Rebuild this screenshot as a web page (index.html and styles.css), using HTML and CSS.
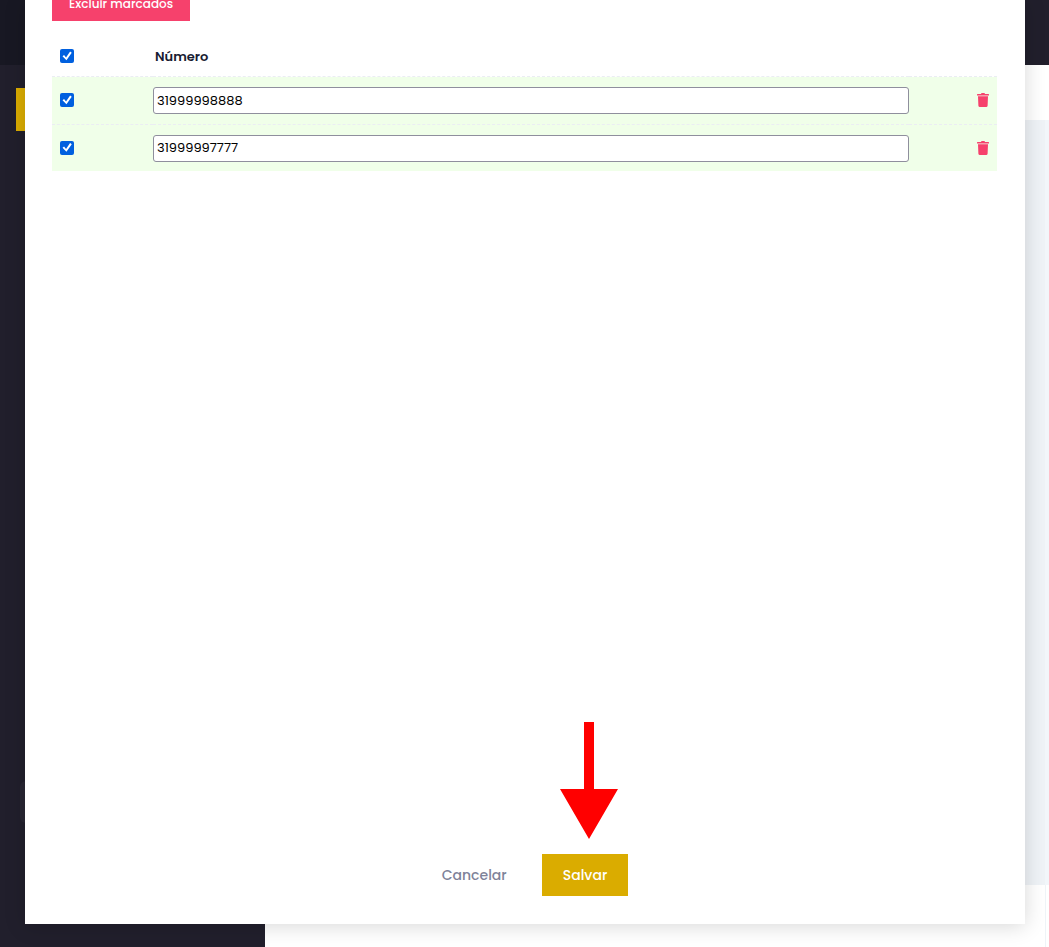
FILE: index.html
```html
<!DOCTYPE html>
<html lang="pt-BR">
<head>
<meta charset="utf-8">
<meta name="viewport" content="width=device-width, initial-scale=1">
<title>Números</title>
<link rel="stylesheet" href="styles.css">
</head>
<body>
<div class="page">
  <aside class="sidebar">
    <div class="brand"></div>
    <div class="nav">
      <div class="nav-active"></div>
      <div class="nav-tile"></div>
    </div>
  </aside>
  <div class="main">
    <div class="topbar"></div>
    <div class="subheader"></div>
    <div class="content"></div>
    <div class="page-footer"></div>
  </div>
</div>

<div class="overlay">
  <form class="modal" role="dialog" aria-label="Números">
    <button type="button" class="btn btn-danger">Excluir marcados</button>
    <table class="numbers">
      <colgroup><col class="col-check"><col class="col-number"><col></colgroup>
      <thead>
        <tr>
          <th><input class="check" type="checkbox" aria-label="Marcar todos" checked></th>
          <th class="number-title" scope="col">Número</th>
          <td></td>
        </tr>
      </thead>
      <tbody>
        <tr>
          <td><input class="check" type="checkbox" aria-label="Marcar 31999998888" checked></td>
          <td class="number-cell"><input class="number" type="text" aria-label="Número 1" value="31999998888"></td>
          <td class="action"><button type="button" class="trash" aria-label="Excluir 31999998888"><svg viewBox="0 0 12 14" width="12" height="14" aria-hidden="true"><path d="M4 1Q4 0 5 0H7Q8 0 8 1H11.4Q12 1 12 1.6V2.5H0V1.6Q0 1 .6 1ZM1 3.2H11L10.6 12.7Q10.4 14 9.2 14H2.8Q1.6 14 1.4 12.7Z"/></svg></button></td>
        </tr>
        <tr>
          <td><input class="check" type="checkbox" aria-label="Marcar 31999997777" checked></td>
          <td class="number-cell"><input class="number" type="text" aria-label="Número 2" value="31999997777"></td>
          <td class="action"><button type="button" class="trash" aria-label="Excluir 31999997777"><svg viewBox="0 0 12 14" width="12" height="14" aria-hidden="true"><path d="M4 1Q4 0 5 0H7Q8 0 8 1H11.4Q12 1 12 1.6V2.5H0V1.6Q0 1 .6 1ZM1 3.2H11L10.6 12.7Q10.4 14 9.2 14H2.8Q1.6 14 1.4 12.7Z"/></svg></button></td>
        </tr>
      </tbody>
    </table>
    <div class="actions">
      <button type="button" class="btn btn-cancel">Cancelar</button>
      <div class="save">
        <svg class="arrow" viewBox="0 0 58 117" width="58" height="117" aria-hidden="true"><path d="M24 0H34V67H58L29 117L0 67H24Z"/></svg>
        <button type="submit" class="btn btn-save">Salvar</button>
      </div>
    </div>
  </form>
</div>
</body>
</html>
```

FILE: styles.css
```css
* { box-sizing: border-box; }

body {
  margin: 0;
  overflow: hidden;
  background: #fff;
  color: #181c32;
  font-family: Poppins, Inter, "Liberation Sans", sans-serif;
  font-size: 13px;
}

.page {
  display: flex;
  height: 100vh;
}

.sidebar {
  width: 265px;
  background: #211f2c;
}

.brand {
  height: 65px;
  background: #181823;
}

.nav {
  display: flex;
  flex-direction: column;
  justify-content: space-between;
  height: calc(100vh - 65px);
  padding: 23px 20px 124px 16px;
}

.nav-active {
  height: 43px;
  background: #daac00;
}

.nav-tile {
  height: 42px;
  margin-left: 4px;
  border-radius: 6px;
  background: #282633;
}

.main {
  display: flex;
  flex: 1;
  flex-direction: column;
}

.topbar {
  height: 65px;
  background: #211f2c;
}

.subheader {
  height: 55px;
  background: #fff;
}

.content {
  flex: 1;
  border-right: 4px solid #f2f6fa;
  background: #eff3f7;
}

.page-footer {
  height: 62px;
  margin-right: 3px;
  border-right: 1px solid #eff3f7;
  background: #fff;
}

.overlay {
  position: absolute;
  inset: 0;
  display: flex;
  padding: 0 24px 23px 25px;
}

.modal {
  display: flex;
  flex: 1;
  flex-direction: column;
  align-items: flex-start;
  padding: 0 28px 28px 27px;
  background: #fff;
  box-shadow: 0 2px 20px rgba(0, 0, 0, 0.16);
}

.btn {
  border: 0;
  font: inherit;
  font-weight: 500;
  cursor: pointer;
}

.btn-danger {
  height: 34px;
  margin-top: -13px;
  padding: 0 17px;
  background: #f6416c;
  color: #fff;
  font-size: 12px;
}

.numbers {
  width: 100%;
  margin-top: 15px;
  border-collapse: separate;
  border-spacing: 0;
  table-layout: fixed;
}

.col-check { width: 101px; }
.col-number { width: 80%; }

.numbers th,
.numbers td {
  height: 48px;
  padding: 0 8px;
  border-bottom: 1px dashed #ebedf3;
  text-align: left;
  vertical-align: middle;
}

.numbers thead th,
.numbers thead td { height: 41px; }

.numbers thead .number-title {
  padding: 2px 0 0 2px;
  font-weight: 600;
}

.numbers tbody td {
  padding-bottom: 1px;
  background: #f0ffe9;
}

.numbers tbody tr:last-child td {
  height: 46px;
  border-bottom: 0;
}

.numbers tbody .number-cell { padding: 0; }

.check {
  display: block;
  appearance: none;
  width: 14px;
  height: 14px;
  margin: 0;
  border-radius: 2px;
  background: #0060df;
}

.check:checked::before {
  content: "";
  display: block;
  width: 14px;
  height: 14px;
  background: #fff;
  clip-path: polygon(18% 51%, 29% 43%, 43% 60%, 72% 18%, 84% 26%, 46% 80%);
}

.number {
  display: block;
  width: 100%;
  height: 27px;
  padding: 0 3px;
  border: 1px solid #8f8f9d;
  border-radius: 3px;
  background: #fff;
  color: #000;
  font: inherit;
}

.trash {
  display: block;
  margin-left: auto;
  padding: 0;
  border: 0;
  background: none;
  cursor: pointer;
}

.trash svg {
  display: block;
  fill: #f6416c;
}

.actions {
  display: flex;
  align-self: stretch;
  justify-content: center;
  gap: 14px;
  margin-top: auto;
}

.actions .btn {
  height: 42px;
  padding: 0 21px;
  font-size: 14px;
}

.btn-cancel {
  background: none;
  color: #7e8299;
}

.save { position: relative; }

.btn-save {
  background: #daac00;
  color: #fff;
}

.arrow {
  position: absolute;
  bottom: 57px;
  left: 18px;
  fill: #f00;
}
```
